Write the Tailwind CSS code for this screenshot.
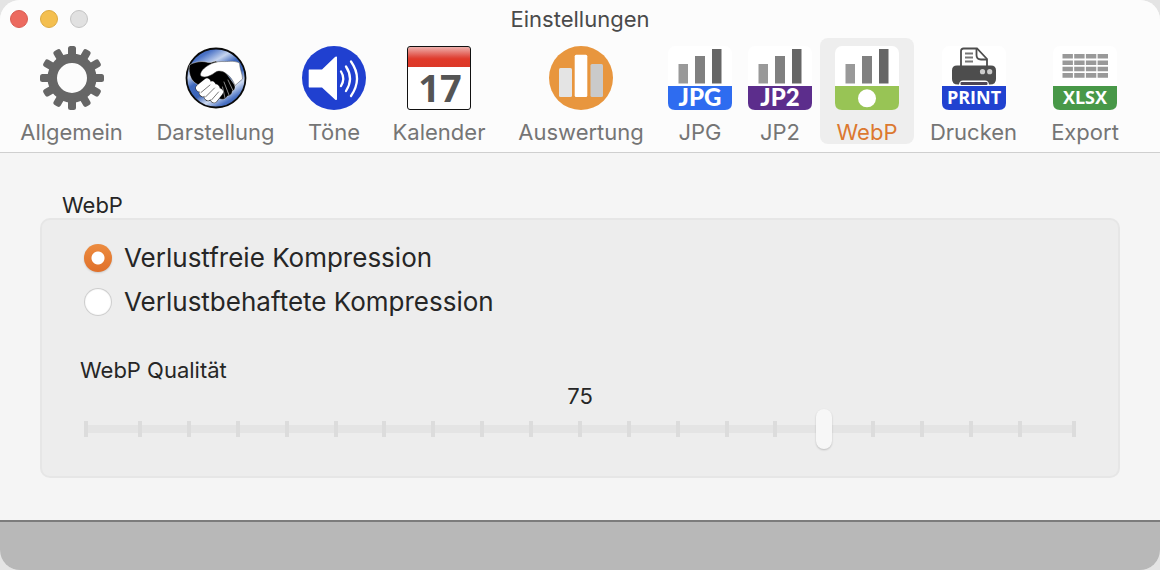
<!DOCTYPE html>
<html lang="de">
<head>
  <meta charset="UTF-8" />
  <meta name="viewport" content="width=device-width, initial-scale=1.0"/>
  <title>Einstellungen</title>
  <script src="https://cdn.jsdelivr.net/npm/@tailwindcss/browser@4"></script>
</head>
<body class="bg-[#e4e4e4] font-['Inter',sans-serif] text-[#262626]">
  <div class="min-h-screen flex flex-col rounded-[20px] overflow-hidden bg-[#f5f5f5]">

    <header class="bg-[#fcfcfc] border-b border-[#cfcfcf] pb-2">
      <!-- Title bar -->
      <div class="grid grid-cols-3 items-center h-[38px] px-[10px]">
        <div class="flex gap-3">
          <button aria-label="Schließen" class="size-[18px] rounded-full bg-[#ec6a5f] border border-[#d95c52]"></button>
          <button aria-label="Minimieren" class="size-[18px] rounded-full bg-[#f4bf4f] border border-[#dca942]"></button>
          <button aria-label="Zoomen" disabled class="size-[18px] rounded-full bg-[#e1e1e1] border border-[#c4c4c4]"></button>
        </div>
        <h1 class="text-center text-[22px] leading-6 text-[#4a4a4a]">Einstellungen</h1>
      </div>

      <!-- Toolbar -->
      <nav class="grid grid-cols-[135fr_153fr_84fr_126fr_158fr_80fr_80fr_94fr_119fr_104fr] pl-1 pr-[23px] text-[22px] leading-6 text-[#757575]">
        <button class="flex flex-col items-center gap-[10px] pt-2 h-[106px]">
          <svg class="size-16 shrink-0" viewBox="0 0 64 64" fill="#666">
            <defs><rect id="tooth" x="28" y="0" width="8" height="12" rx="2.5"/></defs>
            <path fill-rule="evenodd" d="M32 7.5a24.500 24.500 0 1 0 0 49a24.500 24.500 0 1 0 0-49zM32 17a15 15 0 1 1 0 30a15 15 0 1 1 0-30z"/>
            <use href="#tooth"/>
            <use href="#tooth" transform="rotate(30 32 32)"/>
            <use href="#tooth" transform="rotate(60 32 32)"/>
            <use href="#tooth" transform="rotate(90 32 32)"/>
            <use href="#tooth" transform="rotate(120 32 32)"/>
            <use href="#tooth" transform="rotate(150 32 32)"/>
            <use href="#tooth" transform="rotate(180 32 32)"/>
            <use href="#tooth" transform="rotate(210 32 32)"/>
            <use href="#tooth" transform="rotate(240 32 32)"/>
            <use href="#tooth" transform="rotate(270 32 32)"/>
            <use href="#tooth" transform="rotate(300 32 32)"/>
            <use href="#tooth" transform="rotate(330 32 32)"/>
          </svg>
          <span>Allgemein</span>
        </button>

        <button class="flex flex-col items-center gap-[10px] pt-2 h-[106px]">
          <svg class="size-16 shrink-0" viewBox="0 0 64 64">
            <defs>
              <linearGradient id="sky" x1="0.2" y1="0" x2="0.8" y2="1">
                <stop offset="0" stop-color="#3a62b8"/>
                <stop offset="0.12" stop-color="#4a72c6"/>
                <stop offset="0.28" stop-color="#c4d3ee"/>
                <stop offset="0.42" stop-color="#3f69be"/>
                <stop offset="0.6" stop-color="#3a64b8"/>
                <stop offset="0.74" stop-color="#d0dcf2"/>
                <stop offset="0.88" stop-color="#4a72c4"/>
                <stop offset="1" stop-color="#2c4f9e"/>
              </linearGradient>
            </defs>
            <circle cx="32" cy="32" r="29.500" fill="url(#sky)" stroke="#0a0a0a" stroke-width="1.800"/>
            <path d="M5.500 19C8 17 14 15.500 18 15.500C22 15.500 24 17 27 16.500L32 15L40 24L50 38C52 41 51 44 48.500 45C48 48.500 46 50 43.500 50C42 53 39 54 36 53L15 39C12 38 9.500 36 7.500 33C5 28 4.500 23 5.500 19z" fill="#000" stroke="#ddd" stroke-width=".5"/>
            <path d="M16.500 28C17 25 20 22 24 19.500C29 16.500 33 15.500 38 15.500C44 16 49 14 55.500 17C55.500 22 58.500 28 58.500 33C56 35 54 37 51 39.500C49 34 46 30 42 27.500C38 24.500 34 24.500 31 26.500C27 29.500 22 32 18 30.500C16.500 30 16.500 29 16.500 28z" fill="#fff" stroke="#555" stroke-width=".5"/>
            <g fill="none" stroke-linecap="round">
              <g stroke="#222" stroke-width="8">
                <path d="M23 36L15.500 42"/><path d="M28 39L19 47"/><path d="M32 42L24 51"/><path d="M35.500 46L30 53"/>
              </g>
              <g stroke="#fff" stroke-width="7">
                <path d="M23 36L15.500 42"/><path d="M28 39L19 47"/><path d="M32 42L24 51"/><path d="M35.500 46L30 53"/>
              </g>
              <path d="M26 39L17 46.500M30.500 42L21.500 51M34.500 46L27.500 54" stroke="#555" stroke-width=".8"/>
              <path d="M40 36L45 49M44 34L49 44.500M38.500 41L41 52" stroke="#aaa" stroke-width=".8"/>
            </g>
          </svg>
          <span>Darstellung</span>
        </button>

        <button class="flex flex-col items-center gap-[10px] pt-2 h-[106px]">
          <svg class="size-16 shrink-0" viewBox="0 0 64 64">
            <circle cx="32" cy="32" r="32" fill="#2040d0"/>
            <path d="M7.500 23.500H20L33 11C34 10 35 10.500 35 11.500V53C35 54 34 54.500 33 53.500L20 41.500H7.500C7 41.500 6.700 41 6.700 40.500V24.500C6.700 24 7 23.500 7.500 23.500z" fill="#fff"/>
            <path d="M39 25.500Q43.500 32.500 39 40M44 20.500Q52 32.500 44 45M49 15.500Q61 32.500 49 50" fill="none" stroke="#fff" stroke-width="2.300" stroke-linecap="round"/>
          </svg>
          <span>Töne</span>
        </button>

        <button class="flex flex-col items-center gap-[10px] pt-2 h-[106px]">
          <svg class="size-16 shrink-0 overflow-visible" viewBox="0 0 64 64">
            <defs>
              <linearGradient id="red" x1="0" y1="0" x2="0" y2="1">
                <stop offset="0" stop-color="#efb0ac"/>
                <stop offset="0.5" stop-color="#e04a3e"/>
                <stop offset="0.6" stop-color="#e03a2a"/>
                <stop offset="1" stop-color="#dc3828"/>
              </linearGradient>
            </defs>
            <rect x=".5" y=".5" width="63" height="63" rx="2.500" fill="#fff"/>
            <path d="M1 21V3Q1 1 3 1H61Q63 1 63 3V21z" fill="url(#red)"/>
            <rect x=".5" y=".5" width="63" height="63" rx="2.500" fill="none" stroke="#111"/>
            <text x="33" y="56" text-anchor="middle" font-family="Open Sans, sans-serif" font-weight="700" font-size="38" fill="#555">17</text>
          </svg>
          <span>Kalender</span>
        </button>

        <button class="flex flex-col items-center gap-[10px] pt-2 h-[106px]">
          <svg class="size-16 shrink-0" viewBox="0 0 64 64">
            <circle cx="32" cy="32" r="32" fill="#e8963e"/>
            <rect x="10" y="22" width="13" height="29" rx="1.500" fill="#e4e4e4"/>
            <rect x="25.700" y="8.700" width="12.600" height="42.300" rx="1.500" fill="#fff"/>
            <rect x="41.500" y="18" width="12.500" height="33" rx="1.500" fill="#cacaca"/>
          </svg>
          <span>Auswertung</span>
        </button>

        <button class="flex flex-col items-center gap-[10px] pt-2 h-[106px]">
          <svg class="size-16 shrink-0 overflow-visible" viewBox="0 0 64 64">
            <defs>
              <g id="bars">
                <rect width="64" height="64" rx="7" fill="#fff"/>
                <rect x="10.500" y="18" width="9.500" height="19.500" fill="#999"/>
                <rect x="27" y="10" width="10" height="27.500" fill="#808080"/>
                <rect x="44" y="3" width="9.500" height="34.500" fill="#666"/>
              </g>
              <path id="banner" d="M0 40H64V57Q64 64 57 64H7Q0 64 0 57z"/>
            </defs>
            <use href="#bars"/>
            <use href="#banner" fill="#2e6cf0"/>
            <text x="32" y="60" text-anchor="middle" font-family="Lato, sans-serif" font-weight="900" font-size="24" fill="#fff">JPG</text>
          </svg>
          <span>JPG</span>
        </button>

        <button class="flex flex-col items-center gap-[10px] pt-2 h-[106px]">
          <svg class="size-16 shrink-0 overflow-visible" viewBox="0 0 64 64">
            <use href="#bars"/>
            <use href="#banner" fill="#5c2d8c"/>
            <text x="32" y="60" text-anchor="middle" font-family="Lato, sans-serif" font-weight="900" font-size="24" fill="#fff">JP2</text>
          </svg>
          <span>JP2</span>
        </button>

        <button aria-current="page" class="flex flex-col items-center gap-[10px] pt-2 h-[106px] rounded-lg bg-[#eeeeee] text-[#dc7830]">
          <svg class="size-16 shrink-0" viewBox="0 0 64 64">
            <use href="#bars"/>
            <use href="#banner" fill="#98c455"/>
            <circle cx="32" cy="52.300" r="9" fill="#fff"/>
          </svg>
          <span>WebP</span>
        </button>

        <button class="flex flex-col items-center gap-[10px] pt-2 h-[106px]">
          <svg class="size-16 shrink-0 overflow-visible" viewBox="0 0 64 64">
            <rect width="64" height="64" rx="7" fill="#fff"/>
            <path d="M19 22V5Q19 2.500 21.500 2.500H35L45 13V22" fill="#fff" stroke="#4d4d4d" stroke-width="1.800"/>
            <path d="M34.500 3V9Q34.500 13.500 39 13.500H45" fill="none" stroke="#4d4d4d" stroke-width="1.800"/>
            <path d="M23 7.500H31M23 11.500H31M23 15.500H31" stroke="#777" stroke-width="1.800"/>
            <path d="M15 19.500H49Q54 19.500 54 24.500V33Q54 38.500 48 38.500H47Q46.500 34.500 43 34.500H21Q17.500 34.500 17 38.500H16Q10 38.500 10 33V24.500Q10 19.500 15 19.500z" fill="#4d4d4d"/>
            <rect x="18.500" y="36" width="27" height="3" rx="1" fill="#4d4555"/>
            <circle cx="40.500" cy="25.700" r="2.600" fill="#ccc"/>
            <circle cx="47.700" cy="25.700" r="2.600" fill="#ccc"/>
            <use href="#banner" fill="#2142d0"/>
            <text x="32" y="58" text-anchor="middle" font-family="Open Sans, sans-serif" font-weight="700" font-size="18" fill="#fff">PRINT</text>
          </svg>
          <span>Drucken</span>
        </button>

        <button class="flex flex-col items-center gap-[10px] pt-2 h-[106px]">
          <svg class="size-16 shrink-0 overflow-visible" viewBox="0 0 64 64">
            <rect width="64" height="64" rx="7" fill="#fff"/>
            <path d="M9.500 10.300H55M9.500 16.700H55M9.500 23H55M9.500 29.400H55" stroke="#999" stroke-width="4.600" stroke-dasharray="10.400 1.300"/>
            <use href="#banner" fill="#489848"/>
            <text x="32" y="58" text-anchor="middle" font-family="Open Sans, sans-serif" font-weight="700" font-size="18" fill="#fff">XLSX</text>
          </svg>
          <span>Export</span>
        </button>
      </nav>
    </header>

    <!-- WebP settings -->
    <main class="flex-1 px-10 pt-[39px] pb-10">
      <fieldset>
        <legend class="px-[22px] text-[22px] leading-[26px]">WebP</legend>
        <div class="border-2 border-[#e6e6e6] rounded-[10px] bg-[#ededed] px-[38px] pt-4 pb-[27px]">
          <div class="px-1 text-[26px] leading-[44px]">
            <label class="flex items-center gap-3">
              <input type="radio" name="compression" checked class="appearance-none size-7 rounded-full bg-white shadow-[inset_0_0_1px_1px_#c8c8c8] checked:shadow-[0_1px_2px_#00000026] checked:bg-[radial-gradient(circle,#fff_6px,transparent_7px),linear-gradient(#ec8c40,#e0702a)]"/>
              Verlustfreie Kompression
            </label>
            <label class="flex items-center gap-3">
              <input type="radio" name="compression" class="appearance-none size-7 rounded-full bg-white shadow-[inset_0_0_1px_1px_#c8c8c8] checked:shadow-[0_1px_2px_#00000026] checked:bg-[radial-gradient(circle,#fff_6px,transparent_7px),linear-gradient(#ec8c40,#e0702a)]"/>
              Verlustbehaftete Kompression
            </label>
          </div>

          <label for="quality" class="block mt-[33px] text-[22px] leading-[26px]">WebP Qualität</label>
          <output id="quality-value" for="quality" class="block text-center text-[22px] leading-[26px]">75</output>

          <div class="relative h-10 mx-1">
            <!-- Track with tick marks -->
            <div class="flex items-center h-full bg-[linear-gradient(#e4e4e4,#e4e4e4)] bg-[length:100%_8px] bg-center bg-no-repeat">
              <i class="w-1 h-4 bg-[#dcdcdc]"></i>
              <div class="flex flex-1 justify-between mx-[50px]">
                <i class="w-1 h-4 bg-[#dcdcdc]"></i>
                <i class="w-1 h-4 bg-[#dcdcdc]"></i>
                <i class="w-1 h-4 bg-[#dcdcdc]"></i>
                <i class="w-1 h-4 bg-[#dcdcdc]"></i>
                <i class="w-1 h-4 bg-[#dcdcdc]"></i>
                <i class="w-1 h-4 bg-[#dcdcdc]"></i>
                <i class="w-1 h-4 bg-[#dcdcdc]"></i>
                <i class="w-1 h-4 bg-[#dcdcdc]"></i>
                <i class="w-1 h-4 bg-[#dcdcdc]"></i>
                <i class="w-1 h-4 bg-[#dcdcdc]"></i>
                <i class="w-1 h-4 bg-[#dcdcdc]"></i>
                <i class="w-1 h-4 bg-[#dcdcdc]"></i>
                <i class="w-1 h-4 bg-[#dcdcdc]"></i>
                <i class="w-1 h-4 bg-[#dcdcdc]"></i>
                <i class="w-1 h-4 bg-[#dcdcdc]"></i>
                <i class="w-1 h-4 bg-[#dcdcdc]"></i>
                <i class="w-1 h-4 bg-[#dcdcdc]"></i>
                <i class="w-1 h-4 bg-[#dcdcdc]"></i>
                <i class="w-1 h-4 bg-[#dcdcdc]"></i>
              </div>
              <i class="w-1 h-4 bg-[#dcdcdc]"></i>
            </div>
            <input id="quality" type="range" min="0" max="100" value="75" disabled class="absolute inset-0 w-full h-10 appearance-none bg-transparent [&::-webkit-slider-thumb]:appearance-none [&::-webkit-slider-thumb]:w-4 [&::-webkit-slider-thumb]:h-10 [&::-webkit-slider-thumb]:rounded-full [&::-webkit-slider-thumb]:bg-[#f7f7f7] [&::-webkit-slider-thumb]:shadow-[0_1px_2px_#00000033]"/>
          </div>
        </div>
      </fieldset>
    </main>

    <footer class="h-[50px] border-t-2 border-[#7c7c7c] bg-[#b8b8b8]"></footer>
  </div>

  <script>
    // The slider only applies to lossy compression
    const radios = document.querySelectorAll('input[name="compression"]');
    const quality = document.getElementById('quality');

    radios.forEach((radio, i) => {
      radio.addEventListener('change', () => {
        quality.disabled = i === 0;
      });
    });

    quality.addEventListener('input', () => {
      document.getElementById('quality-value').innerText = quality.value;
    });
  </script>
</body>
</html>
